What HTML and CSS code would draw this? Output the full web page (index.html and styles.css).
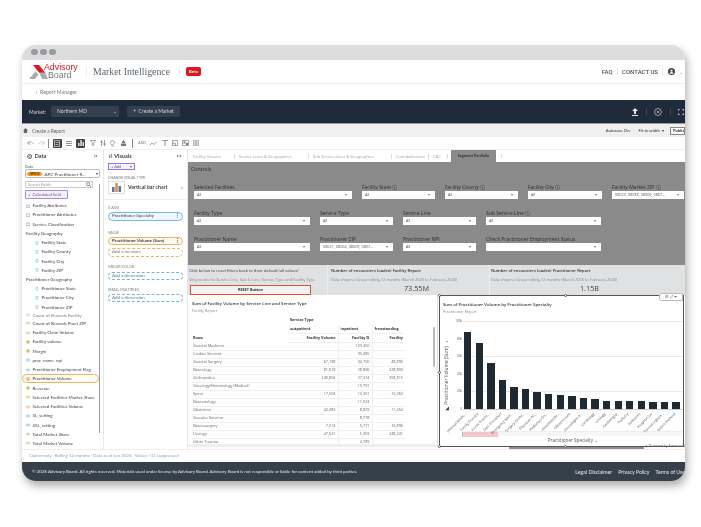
FILE: index.html
```html
<!DOCTYPE html>
<html lang="en">
<head>
  <meta charset="UTF-8">
  <meta name="viewport" content="width=device-width, initial-scale=1.0">
  <title>Market Intelligence</title>
  <link rel="stylesheet" href="styles.css">
</head>
<body>
  <svg class="sprite" aria-hidden="true">
    <symbol id="i-folder" viewBox="0 0 10 8"><path d="M.5 1h3l1 1h5v5.500h-9z" fill="none" stroke="#666"/></symbol>
    <symbol id="i-pin" viewBox="0 0 8 10"><path d="M4 9.500C2 6.500 1 5.200 1 3.600a3 3 0 0 1 6 0C7 5.200 6 6.500 4 9.500z" fill="none" stroke="#4aa3d8" stroke-width="1.200"/></symbol>
    <symbol id="i-num" viewBox="0 0 8 8"><path d="M2.500 .5v7M5.500 .5v7M.5 2.500h7M.5 5.500h7" fill="none" stroke="#e09a3e" stroke-width="1.200"/></symbol>
    <symbol id="i-eq" viewBox="0 0 8 8"><path d="M.5 2.500h7M.5 5.500h7" fill="none" stroke="#e8a64e" stroke-width="1.400"/></symbol>
    <symbol id="i-abc" viewBox="0 0 8 8"><path d="M.5 2.500h7M.5 5.500h7" fill="none" stroke="#6cb4e0" stroke-width="1.400"/></symbol>
  </svg>

  <div class="window">
    <div class="titlebar"><i></i><i></i><i></i></div>

    <header class="site-head">
      <div class="logo">
        <svg width="19" height="14" viewBox="0 0 19 14"><path d="M0 14l6.500-7.500 3 3L6 14z" fill="#a9abae"/><path d="M10 7h6l3 7h-6z" fill="#a9abae"/><path d="M4 0h6l6 7.500h-6z" fill="#e0131e"/></svg>
        <div class="logo-txt"><span class="adv">Advisory</span><span class="brd">Board</span></div>
      </div>
      <div class="app-name">Market Intelligence</div>
      <span class="beta">Beta</span>
      <nav class="head-links">
        <a>FAQ</a>
        <a>CONTACT US</a>
        <svg width="7" height="7" viewBox="0 0 8 8"><circle cx="4" cy="4" r="4" fill="#3c4650"/><circle cx="4" cy="3" r="1.300" fill="#fff"/><path d="M1.800 6.500a2.200 2 0 0 1 4.400 0z" fill="#fff"/></svg>
        <span class="caret">⌄</span>
      </nav>
    </header>

    <div class="crumb">‹&nbsp; Report Manager</div>

    <div class="market-bar">
      <span class="market-lbl">Market:</span>
      <div class="market-sel">Northern MD <span>⌄</span></div>
      <div class="market-btn">+ &nbsp;Create a Market</div>
      <div class="market-icons">
        <svg width="6" height="8" viewBox="0 0 6 8"><path d="M3 0l3 3H4v3H2V3H0zM0 7h6v1H0z" fill="#e8eaec"/></svg>
        <b></b>
        <svg width="8" height="8" viewBox="0 0 8 8"><circle cx="4" cy="4" r="3.500" fill="none" stroke="#c8ccd0" stroke-width=".7"/><path d="M2.600 2.600l2.800 2.800M5.400 2.600L2.600 5.400" stroke="#c8ccd0" stroke-width=".7"/></svg>
        <b></b>
        <svg width="6" height="6" viewBox="0 0 6 6"><path d="M0 2V0h2M4 0h2v2M6 4v2H4M2 6H0V4" fill="none" stroke="#e8eaec"/></svg>
      </div>
    </div>

    <div class="report-bar">
      <svg width="5" height="5" viewBox="0 0 6 6"><path d="M3 0l3 3H5v3H1V3H0z" fill="#666"/></svg>
      <span class="report-name">Create a Report</span>
      <div class="report-right">
        <span>Autosave On:</span>
        <span>Fit to width &nbsp;▾</span>
        <span class="publish">Publish</span>
      </div>
    </div>

    <div class="toolbar">
      <svg width="7" height="5" viewBox="0 0 7 5"><path d="M1 2c2-2 4-1.500 5.500 1M1 .5V3h2.500" fill="none" stroke="#888" stroke-width=".7"/></svg>
      <svg width="7" height="5" viewBox="0 0 7 5"><path d="M6 2C4 0 2 .5.500 3M6 .5V3H3.500" fill="none" stroke="#bbb" stroke-width=".7"/></svg>
      <b class="sep"></b>
      <span class="tool-on"><svg width="6" height="7" viewBox="0 0 6 7"><path d="M.5.500h5v6h-5zM1.500 2.500h3M1.500 4.500h3" fill="none" stroke="#ddd" stroke-width=".7"/></svg></span>
      <svg width="6" height="5" viewBox="0 0 6 5"><path d="M0 .5h6M0 2.500h6M0 4.500h6" stroke="#666" stroke-width=".7"/></svg>
      <span class="tool-on"><svg width="6" height="6" viewBox="0 0 6 6"><path d="M0 6V3h1.500v3zM2.200 6V0h1.600v6zM4.500 6V2H6v4z" fill="#ddd"/></svg></span>
      <svg width="6" height="6" viewBox="0 0 6 6"><path d="M.3.500h5.400L3.700 3v2.500l-1.400-.7V3z" fill="none" stroke="#666" stroke-width=".6"/></svg>
      <svg width="6" height="6" viewBox="0 0 6 6"><path d="M1.500 0v6M4.500 0v6M0 2h3M3 4h3" stroke="#777" stroke-width=".7"/></svg>
      <svg width="5" height="7" viewBox="0 0 5 7"><path d="M2.500.5a2 2 0 0 1 1 3.700V5h-2v-.8a2 2 0 0 1 1-3.700zM1.500 6.300h2" fill="none" stroke="#777" stroke-width=".6"/></svg>
      <svg width="7" height="6" viewBox="0 0 7 6"><path d="M3.500 0l2.500 3.500H1zM1 4h5v2H1z" fill="#777"/></svg>
      <b class="sep sep-b"></b>
      <span class="tool-txt">ADD</span>
      <svg width="7" height="5" viewBox="0 0 7 5"><path d="M0 4l2-2 2 1.500L7 .5" fill="none" stroke="#777" stroke-width=".7"/></svg>
      <svg width="6" height="6" viewBox="0 0 6 6"><path d="M0 .4h6M3 .4V6" stroke="#777" stroke-width=".8"/></svg>
      <svg width="6" height="6" viewBox="0 0 6 6"><path d="M.4.400h5.200v5.200H.4zM.4 3h3v2.600" fill="none" stroke="#777" stroke-width=".7"/></svg>
      <svg width="7" height="6" viewBox="0 0 7 6"><path d="M.4.400h6v5.200h-6z" fill="none" stroke="#777" stroke-width=".7"/><path d="M1.500 1.500h2v2h-2zM4 3h2v2H4z" fill="#777"/></svg>
      <svg width="6" height="6" viewBox="0 0 6 6"><path d="M.4.400h5.200v5.200H.4zM.4 2.200h5.200M.4 4h5.200M3 .4v5.200" fill="none" stroke="#888" stroke-width=".6"/></svg>
    </div>

    <div class="workspace">
      <aside class="pane data-pane">
        <div class="pane-head"><span>◎ &nbsp;Data</span><span class="collapse">|◂</span></div>
        <div class="mini-lbl">Data</div>
        <div class="ds-select"><span class="spice">SPICE</span> APC Practitioner R...<span class="tri">▾</span></div>
        <div class="search">Search Fields<svg width="5" height="5" viewBox="0 0 6 6"><circle cx="2.500" cy="2.500" r="2" fill="none" stroke="#555" stroke-width=".8"/><path d="M4 4l2 2" stroke="#555" stroke-width=".8"/></svg></div>
        <div class="calc-btn">+ &nbsp;Calculated field</div>
        <div class="field-wrap">
          <ul class="fields">
            <li><svg><use href="#i-folder"/></svg>Facility Attributes</li>
            <li><svg><use href="#i-folder"/></svg>Practitioner Attributes</li>
            <li><svg><use href="#i-folder"/></svg>Service Classification</li>
            <li class="group">Facility Geography</li>
            <li class="sub"><svg><use href="#i-pin"/></svg>Facility State</li>
            <li class="sub"><svg><use href="#i-pin"/></svg>Facility County</li>
            <li class="sub"><svg><use href="#i-pin"/></svg>Facility City</li>
            <li class="sub"><svg><use href="#i-pin"/></svg>Facility ZIP</li>
            <li class="group">Practitioner Geography</li>
            <li class="sub"><svg><use href="#i-pin"/></svg>Practitioner State</li>
            <li class="sub"><svg><use href="#i-pin"/></svg>Practitioner City</li>
            <li class="sub"><svg><use href="#i-pin"/></svg>Practitioner ZIP</li>
            <li class="clipped"><svg><use href="#i-eq"/></svg>Count of Records Facility</li>
            <li><svg><use href="#i-eq"/></svg>Count of Records Pract ZIP</li>
            <li><svg><use href="#i-eq"/></svg>Facility Claim Volume</li>
            <li><svg><use href="#i-num"/></svg>Facility volume</li>
            <li><svg><use href="#i-num"/></svg>Margin</li>
            <li><svg><use href="#i-abc"/></svg>prac_name_npi</li>
            <li><svg><use href="#i-abc"/></svg>Practitioner Employment Flag</li>
            <li class="picked"><svg><use href="#i-num"/></svg>Practitioner Volume</li>
            <li><svg><use href="#i-num"/></svg>Revenue</li>
            <li><svg><use href="#i-eq"/></svg>Selected Facilities Market Share</li>
            <li><svg><use href="#i-eq"/></svg>Selected Facilities Volume</li>
            <li><svg><use href="#i-abc"/></svg>SL_setting</li>
            <li><svg><use href="#i-abc"/></svg>SSL_setting</li>
            <li><svg><use href="#i-eq"/></svg>Total Market Share</li>
            <li><svg><use href="#i-eq"/></svg>Total Market Volume</li>
          </ul>
          <div class="vscroll"></div>
        </div>
      </aside>

      <aside class="pane visuals-pane">
        <div class="pane-head"><span>ıl &nbsp;Visuals</span><span class="collapse">▸◂</span></div>
        <div class="add-btn"><span>+ Add</span><span>▾</span></div>
        <div class="well-lbl type-lbl">CHANGE VISUAL TYPE</div>
        <div class="type-row">
          <span class="type-icon"><svg width="9" height="9" viewBox="0 0 9 9"><path d="M0 9V4h2.500v5z" fill="#5f6fb0"/><path d="M3.200 9V0h2.600v9z" fill="#d9973d"/><path d="M6.500 9V3H9v6z" fill="#5f6fb0"/></svg></span>
          <span class="type-name">Vertical bar chart</span>
          <span class="type-go">›</span>
        </div>
        <div class="well-lbl xaxis">X AXIS</div>
        <div class="pill blue solid">Practitioner Specialty<span>⋮</span></div>
        <div class="well-lbl value">VALUE</div>
        <div class="pill orange solid">Practitioner Volume (Sum)<span>⋮</span></div>
        <div class="pill orange second">Add a measure</div>
        <div class="well-lbl group-lbl">GROUP/COLOR</div>
        <div class="pill blue group-pill">Add a dimension</div>
        <div class="well-lbl small-lbl">SMALL MULTIPLES</div>
        <div class="pill blue">Add a dimension</div>
      </aside>

      <main class="canvas">
        <div class="tabs">
          <span>Facility Volume</span>
          <span>Service Lines &amp; Geographies</span>
          <span>Sub Service Lines &amp; Geographies</span>
          <span>Cannibalization</span>
          <span>CAC</span>
          <span class="active">Segment Portfolio</span>
          <span class="empty"></span>
        </div>

        <section class="controls">
          <div class="controls-title">Controls</div>
          <div class="ctl-row">
            <div class="ctl w158"><label>Selected Facilities</label><div class="sel">All<span>▾</span></div></div>
            <div class="ctl w73"><label>Facility State ⓘ</label><div class="sel">All<span>▾</span></div></div>
            <div class="ctl w73"><label>Facility County ⓘ</label><div class="sel">All<span>▾</span></div></div>
            <div class="ctl w74"><label>Facility City ⓘ</label><div class="sel">All<span>▾</span></div></div>
            <div class="ctl w72"><label>Facility Market ZIP ⓘ</label><div class="sel">08023, 08038, 08069, 0807...<span>▾</span></div></div>
          </div>
          <div class="ctl-row">
            <div class="ctl w116"><label>Facility Type</label><div class="sel">All<span>▾</span></div></div>
            <div class="ctl w73"><label>Service Type</label><div class="sel">All<span>▾</span></div></div>
            <div class="ctl w73"><label>Service Line</label><div class="sel">All<span>▾</span></div></div>
            <div class="ctl w115"><label>Sub Service Line ⓘ</label><div class="sel">All<span>▾</span></div></div>
          </div>
          <div class="ctl-row">
            <div class="ctl w116"><label>Practitioner Name</label><div class="sel">All<span>▾</span></div></div>
            <div class="ctl w73"><label>Practitioner ZIP</label><div class="sel">08021, 08004, 08009, 0807...<span>▾</span></div></div>
            <div class="ctl w73"><label>Practitioner NPI</label><div class="sel">All<span>▾</span></div></div>
            <div class="ctl w115"><label>Check Practitioner Employment Status</label><div class="sel"><span>▾</span></div></div>
          </div>
        </section>

        <section class="kpis">
          <div class="kpi kpi-a">
            <p class="kpi-title plain">Click below to reset filters back to their default (all values)</p>
            <p class="kpi-note">Only works for Service Line, Sub S. Line, Service Type and Facility Type</p>
            <div class="reset">RESET Button</div>
          </div>
          <div class="kpi kpi-b">
            <p class="kpi-title">Number of encounters loaded: Facility Report</p>
            <p class="kpi-note">Data shown is latest rolling-12 months (March 2025 to February 2026)</p>
            <div class="kpi-val">73.55M</div>
          </div>
          <div class="kpi kpi-c">
            <p class="kpi-title">Number of encounters loaded: Practitioner Report</p>
            <p class="kpi-note">Data shown is latest rolling-12 months (March 2025 to February 2026)</p>
            <div class="kpi-val">1.15B</div>
          </div>
        </section>

        <section class="visuals">
          <div class="table-card">
            <div class="card-title">Sum of Facility Volume by Service Line and Service Type</div>
            <div class="card-sub">Facility Report</div>
            <table class="pivot">
              <colgroup><col class="c-rows"><col class="c-out"><col class="c-in"><col class="c-free"></colgroup>
              <tr class="top"><th></th><th colspan="3" class="left">Service Type</th></tr>
              <tr class="head"><th></th><th class="left">outpatient</th><th class="left">inpatient</th><th class="left">freestanding</th></tr>
              <tr class="head"><th class="left">Rows</th><th>Facility Volume</th><th>Facility ⇅</th><th>Facility</th></tr>
              <tr><td>General Medicine</td><td></td><td>123,450</td><td></td></tr>
              <tr><td>Cardiac Services</td><td></td><td>95,485</td><td></td></tr>
              <tr><td>General Surgery</td><td>67,198</td><td>34,700</td><td>48,890</td></tr>
              <tr><td>Neurology</td><td>81,619</td><td>28,806</td><td>228,800</td></tr>
              <tr><td>Orthopedics</td><td>140,804</td><td>27,314</td><td>358,815</td></tr>
              <tr><td>Oncology/Hematology (Medical)</td><td></td><td>15,791</td><td></td></tr>
              <tr><td>Spine</td><td>17,504</td><td>13,301</td><td>10,263</td></tr>
              <tr><td>Neonatology</td><td></td><td>11,024</td><td></td></tr>
              <tr><td>Obstetrics</td><td>42,483</td><td>8,829</td><td>11,454</td></tr>
              <tr><td>Vascular Services</td><td></td><td>8,778</td><td></td></tr>
              <tr><td>Neurosurgery</td><td>7,013</td><td>5,771</td><td>16,896</td></tr>
              <tr><td>Urology</td><td>47,621</td><td>5,303</td><td>248,241</td></tr>
              <tr><td>Other Trauma</td><td></td><td>4,789</td><td></td></tr>
            </table>
            <div class="table-scroll"></div>
          </div>

          <div class="chart-card">
            <i class="handle h-tl"></i><i class="handle h-tc"></i><i class="handle h-ml"></i><i class="handle h-bl"></i><i class="handle h-bc"></i>
            <div class="chart-tools">⚙ ⤢ ⏷</div>
            <div class="card-title">Sum of Practitioner Volume by Practitioner Specialty</div>
            <div class="card-sub">Practitioner Report</div>
            <div class="chart-body">
              <div class="y-title">◤ Practitioner Volume (Sum) ⌄</div>
              <div class="y-ticks"><span>100k</span><span>80k</span><span>60k</span><span>40k</span><span>20k</span><span>0</span></div>
              <div class="plot">
                <div class="bars">
                  <i style="height:76.7px"></i><i style="height:65.7px"></i><i style="height:45.7px"></i><i style="height:29px"></i><i style="height:21.7px"></i><i style="height:20.3px"></i><i style="height:17px"></i><i style="height:14.7px"></i><i style="height:13.700px"></i><i style="height:13px"></i><i style="height:11.3px"></i><i style="height:10px"></i><i style="height:8.3px"></i><i style="height:7.7px"></i><i style="height:7.7px"></i><i style="height:7.7px"></i><i style="height:7px"></i><i style="height:6.7px"></i><i style="height:6.7px"></i>
                </div>
                <div class="x-labels">
                  <span>Internal Medic...</span><span>Family Practice</span><span>Nurse Practit...</span><span>Gen. Practition</span><span>Emergency Med...</span><span>Surgery Ortho...</span><span>Physician As...</span><span>Radiation On...</span><span>Anesthesiolo...</span><span>Obstetricians</span><span>Neurologist A...</span><span>Cardiology</span><span>Urology</span><span>Cardiologist</span><span>Podiatry</span><span>Pediatrics</span><span>Hospital Car</span><span>Neurosurgeon...</span><span>Gastro General</span>
                </div>
                <div class="x-scroll"><i></i></div>
                <div class="x-title">Practitioner Specialty ⌄</div>
              </div>
            </div>
          </div>
        </section>
        <div class="canvas-foot"><div class="h-thumb"></div><div class="powered">◍ Powered by Amazon Q</div></div>
      </main>
    </div>

    <div class="disclaimer">Claims-only · Rolling 12 months · Data as of Jun 2026 · Values &lt;11 suppressed</div>

    <footer class="site-foot">
      <span>© 2026 Advisory Board. All rights reserved. Materials used under license by Advisory Board. Advisory Board is not responsible or liable for content added by third parties.</span>
      <nav><a>Legal Disclaimer</a><a>Privacy Policy</a><a>Terms of Use</a></nav>
    </footer>
  </div>
</body>
</html>
```

FILE: styles.css
```css
* { box-sizing: border-box; }

html, body { margin: 0; height: 100%; }

body {
  background: #fff;
  padding: 45px 0 0 22px;
  font-family: "Lato", "Liberation Sans", sans-serif;
  color: #444;
  overflow: hidden;
}

.sprite { display: none; }

.window {
  width: 663px;
  height: 436px;
  border-radius: 14px;
  overflow: hidden;
  background: #fff;
  box-shadow: 2px 5px 9px rgba(0, 0, 0, .32);
  display: flex;
  flex-direction: column;
  filter: blur(.4px);
}

/* window chrome */
.titlebar {
  height: 15px;
  background: #dcddde;
  display: flex;
  align-items: center;
  gap: 2.500px;
  padding: 0 0 1px 9px;
}
.titlebar i { width: 6.700px; height: 6.700px; border-radius: 50%; background: #999b9e; }

.site-head {
  height: 24px;
  display: flex;
  align-items: center;
  padding-left: 7px;
  border-bottom: 1px solid #f0f0f0;
}
.logo { display: flex; align-items: center; width: 57px; flex: none; }
.logo-txt {
  display: flex;
  flex-direction: column;
  margin-left: -4px;
  font-family: "Liberation Sans", sans-serif;
  font-size: 8.800px;
  line-height: 8.800px;
}
.adv { color: #e0131e; height: 7.500px; line-height: 7.500px; overflow: visible; }
.brd { color: #777; margin-left: 4px; height: 7.500px; line-height: 7.500px; }
.app-name {
  width: 94px;
  padding-left: 6px;
  border-left: 1px solid #eee;
  border-right: 1px solid #eee;
  font-family: "Liberation Serif", serif;
  font-size: 9.800px;
  color: #5b6670;
  white-space: nowrap;
}
.beta {
  margin-left: 6px;
  width: 15px;
  height: 9px;
  border-radius: 2px;
  background: #e0131e;
  color: #fff;
  font-size: 4.500px;
  font-weight: 700;
  line-height: 9px;
  text-align: center;
}
.head-links {
  margin-left: auto;
  padding-right: 2px;
  display: flex;
  align-items: center;
  gap: 8.500px;
  font-family: "Roboto", sans-serif;
  font-size: 6px;
  font-weight: 500;
  color: #4a535c;
}
.head-links a + a { border-left: 1px solid #e6e6e6; border-right: 1px solid #e6e6e6; padding: 0 4px; margin: 0 -4px; }
.caret { margin-left: -4px; font-size: 5px; color: #999; }

.crumb {
  height: 16px;
  padding-left: 14px;
  font-size: 5.200px;
  line-height: 16px;
  color: #777;
}

.market-bar {
  height: 24px;
  background: #1f2a3a;
  border-bottom: 1px solid #999;
  display: flex;
  align-items: center;
  padding-left: 7px;
  font-size: 5px;
  color: #cfd3d8;
}
.market-lbl { width: 22px; }
.market-sel {
  width: 68px;
  height: 11px;
  background: #33404f;
  border-radius: 1px;
  padding: 0 2px 0 6px;
  line-height: 10px;
  display: flex;
  justify-content: space-between;
}
.market-btn {
  margin-left: 8px;
  width: 53px;
  height: 11px;
  background: #33404f;
  border-radius: 1px;
  line-height: 10px;
  text-align: center;
}
.market-icons {
  margin-left: auto;
  margin-right: 1px;
  display: flex;
  align-items: center;
  gap: 7.500px;
}
.market-icons b { width: 1px; height: 7px; background: #3a4757; }

.report-bar {
  height: 13px;
  background: #f0f0f0;
  display: flex;
  align-items: center;
  padding-left: 1px;
  font-size: 4.800px;
  color: #666;
}
.report-name { margin-left: 4px; }
.report-right {
  margin-left: auto;
  display: flex;
  align-items: center;
  gap: 8px;
  font-size: 4.200px;
  color: #333;
}
.publish {
  margin-left: -2px;
  width: 15px;
  height: 8px;
  background: #fff;
  border: 1px solid #888;
  line-height: 6px;
  padding-left: 2px;
  font-weight: 700;
  overflow: hidden;
}

.toolbar {
  height: 13px;
  display: flex;
  align-items: center;
  gap: 4.300px;
  padding-left: 5px;
  border-bottom: 1px solid #eee;
}
.sep { width: 1px; height: 9px; margin-left: -2px; background: #888; }
.sep-b { margin-left: 1px; }
.tool-on {
  width: 9px;
  height: 9px;
  background: #444;
  border-radius: 1px;
  display: flex;
  align-items: center;
  justify-content: center;
}
.tool-txt { margin-left: 1px; font-size: 3.500px; color: #777; }

/* builder area */
.workspace {
  height: 299px;
  display: grid;
  grid-template-columns: 82px 84px 1fr;
  overflow: hidden;
}
.pane { border-right: 1px solid #e8e8e8; padding: 0 3px; overflow: hidden; }

.pane-head {
  height: 14px;
  display: flex;
  justify-content: space-between;
  padding: 3px 3px 0 2px;
  font-size: 5.500px;
  font-weight: 700;
  color: #444;
}
.collapse { font-size: 4px; color: #777; }

.mini-lbl { height: 5px; font-size: 3.800px; line-height: 5px; color: #555; }
.ds-select {
  width: 75px;
  height: 9px;
  border: 1px solid #bbb;
  border-radius: 2px;
  display: flex;
  align-items: center;
  padding: 0 1px;
  font-size: 4.600px;
  white-space: nowrap;
}
.spice {
  background: #f59a1b;
  border-radius: 3px;
  padding: 0 3px;
  margin-right: 2px;
  font-size: 3.500px;
  font-weight: 700;
  color: #5a3400;
}
.tri { margin-left: auto; font-size: 4px; }
.search {
  width: 68px;
  height: 7px;
  margin-top: 3px;
  border: 1px solid #ccc;
  padding: 0 1px 0 2px;
  display: flex;
  justify-content: space-between;
  align-items: center;
  font-size: 4px;
  color: #999;
}
.calc-btn {
  width: 43px;
  height: 9px;
  margin-top: 2px;
  border: 1px solid #a78bdc;
  border-radius: 1px;
  background: #f4f0fc;
  font-size: 4.200px;
  line-height: 7px;
  padding-left: 2px;
  color: #6a4fb0;
  white-space: nowrap;
}

.field-wrap { display: flex; margin-top: 2px; height: 250px; }
.fields {
  list-style: none;
  margin: 0;
  padding: 0;
  width: 74px;
  flex: none;
  font-size: 4.500px;
  color: #444;
}
.fields li {
  height: 9.240px;
  display: flex;
  align-items: center;
  gap: 2.500px;
  padding-left: 1px;
  white-space: nowrap;
}
.fields svg { width: 4px; height: 4px; flex: none; }
.fields .group { padding-left: 1px; }
.fields .sub { padding-left: 10px; }
.fields .clipped { height: 7px; overflow: hidden; opacity: .7; }
.fields .picked {
  border: 1px solid #eab46c;
  border-radius: 5px;
  background: #fffaf2;
  margin-left: -3px;
  padding-left: 3px;
}
.vscroll { width: 3px; margin-left: 0; height: 249px; margin-top: -17px; background: #9a9a9a; border-radius: 2px; }

.add-btn {
  width: 27px;
  height: 7px;
  margin-left: 1px;
  margin-top: -1px;
  border: 1px solid #9a78d8;
  display: flex;
  justify-content: space-between;
  font-size: 4px;
  line-height: 5px;
  color: #6a4fb0;
  padding: 0 2px;
  background: #f6f2fd;
}
.well-lbl { margin-left: 1px; font-size: 3.600px; line-height: 5px; height: 5px; color: #777; }
.type-lbl { margin-top: 5px; }
.type-row {
  margin: 1px -3px 0;
  padding: 0 4px 6px;
  height: 19px;
  display: flex;
  align-items: center;
  border-bottom: 1px solid #eee;
}
.type-icon {
  width: 17px;
  height: 13px;
  border: 1px solid #ddd;
  display: flex;
  align-items: center;
  justify-content: center;
}
.type-name { margin-left: 3px; font-size: 5.200px; font-weight: 700; color: #444; white-space: nowrap; }
.type-go { margin-left: auto; font-size: 7px; color: #777; line-height: 5px; }
.xaxis { margin-top: 5px; }
.value { margin-top: 9px; }
.group-lbl { margin-top: 7px; }
.small-lbl { margin-top: 6.500px; }
.pill {
  height: 8.500px;
  margin: 2px 0 0 1px;
  width: 75px;
  border: 1px dashed;
  border-radius: 5px;
  padding: 0 2px 0 3px;
  display: flex;
  justify-content: space-between;
  font-size: 4.500px;
  line-height: 6.500px;
  color: #777;
  white-space: nowrap;
}
.pill.blue { border-color: #72b6e2; }
.pill.orange { border-color: #ecb166; }
.pill.solid { border-style: solid; color: #444; }
.pill.blue.solid { background: #eef7fd; }
.pill.orange.solid { background: #fff8ef; font-weight: 700; }
.pill.second, .pill.group-pill { margin-top: 3px; }

/* report canvas */
.canvas { min-width: 0; overflow: hidden; font-family: "Open Sans", "Liberation Sans", sans-serif; }

.tabs {
  height: 12px;
  display: flex;
  align-items: center;
  padding-left: 4px;
  font-size: 4px;
  color: #a0a0a0;
  white-space: nowrap;
}
.tabs span { padding-left: 1px; border-right: 1px solid #ddd; line-height: 5px; margin-right: 3px; overflow: hidden; }
.tabs span:nth-child(1) { width: 43px; }
.tabs span:nth-child(2) { width: 71px; }
.tabs span:nth-child(3) { width: 80px; }
.tabs span:nth-child(4) { width: 34px; }
.tabs span:nth-child(5) { width: 16px; margin-right: 3px; }
.tabs .active {
  width: 45px;
  height: 12px;
  margin: 0 5px 0 0;
  padding: 0;
  background: #8a8a8a;
  border: 0;
  color: #333;
  font-size: 3.500px;
  font-weight: 700;
  line-height: 12px;
  text-align: center;
}
.tabs .empty { padding: 0; margin: 0; height: 4px; }

.controls {
  height: 103px;
  background: #8a8a8a;
  padding-left: 6px;
  color: #2e2e2e;
  overflow: hidden;
}
.controls-title { height: 22px; padding-top: 4px; margin-left: -3px; font-size: 5.200px; line-height: 7px; }
.ctl-row { display: flex; gap: 10px; margin-bottom: 11.500px; white-space: nowrap; }
.ctl { flex: none; }
.ctl label { display: block; height: 7px; font-size: 5px; line-height: 6px; }
.sel {
  height: 7.500px;
  background: #fff;
  padding: 0 5px 0 3px;
  display: flex;
  justify-content: space-between;
  font-size: 3.800px;
  line-height: 7.500px;
  color: #555;
  overflow: hidden;
}
.sel span { margin-left: auto; font-size: 3.500px; color: #777; }
.w158 { width: 158px; }
.w116 { width: 116px; }
.w115 { width: 115px; }
.w74 { width: 74px; }
.w73 { width: 73px; }
.w72 { width: 72px; }

.kpis {
  height: 30px;
  display: grid;
  grid-template-columns: 139px 161px 1fr;
  gap: 1px;
  background: #eee;
  overflow: hidden;
}
.kpi { background: #dfe1e2; padding: 3px 3px 0; font-size: 4.100px; color: #444; white-space: nowrap; overflow: hidden; }
.kpi-a { padding-left: 1px; }
.kpi-c { padding-left: 1px; }
.kpi p { margin: 0; line-height: 6px; }
.kpi-title { font-weight: 600; color: #333; }
.kpi-title.plain { font-weight: 400; }
.kpi .kpi-note { margin-top: 3px; color: #888; font-size: 3.900px; }
.reset {
  width: 121px;
  height: 10px;
  margin: 2px 0 0 1px;
  background: #f2f2f2;
  border: 1px solid #d9532c;
  text-align: center;
  font-size: 3.800px;
  font-weight: 700;
  line-height: 8px;
  color: #333;
}
.kpi-val { text-align: center; font-size: 7.300px; line-height: 11px; color: #444; }
.kpi-b .kpi-val { padding-left: 16px; }
.kpi-c .kpi-val { padding-left: 6px; }

.visuals { height: 151px; display: grid; grid-template-columns: 250px 246px; }
.table-card { position: relative; padding: 5px 0 0 4px; border-right: 1px solid #ddd; border-bottom: 3px solid #eee; overflow: hidden; }
.card-title { font-size: 4.300px; font-weight: 600; line-height: 6px; color: #333; white-space: nowrap; }
.card-sub { margin-top: 2px; font-size: 3.800px; line-height: 6px; color: #888; }

.pivot {
  width: 213px;
  margin-top: 1px;
  table-layout: fixed;
  border-collapse: collapse;
  font-size: 3.800px;
  color: #666;
}
.c-rows { width: 96px; }
.c-out { width: 50px; }
.c-in { width: 34px; }
.c-free { width: 33px; }
.pivot td, .pivot th {
  height: 8px;
  padding: 0 2px;
  line-height: 6px;
  border-bottom: 1px solid #f0f0f0;
  text-align: right;
  white-space: nowrap;
}
.pivot th { font-weight: 700; color: #333; }
.pivot .left { text-align: left; }
.pivot td:first-child { text-align: left; padding-left: 1px; }
.pivot th:first-child { padding-left: 1px; }
.pivot td:nth-child(2), .pivot th:nth-child(2) { border-right: 1px solid #f0f0f0; }
.pivot td:nth-child(3), .pivot th:nth-child(3) { border-right: 1px solid #f0f0f0; }
.pivot .top th { height: 10px; border: 0; }
.pivot .top th.left { padding-left: 2px; }
.pivot .head th { height: 8.500px; }
.pivot .head th:first-child { border-bottom-color: transparent; }

.table-scroll { position: absolute; top: 32px; right: 2px; width: 2px; height: 40px; background: #bbb; border-radius: 1px; }

.chart-card {
  position: relative;
  margin-left: 1px;
  width: 245px;
  border: 1px solid #555;
  padding: 5px 0 0 3px;
}
.handle { position: absolute; width: 3px; height: 3px; border: 1px solid #555; border-radius: 50%; background: #fff; }
.h-tl { left: -2px; top: -2px; }
.h-tc { left: 124px; top: -2px; }
.h-ml { left: -2px; top: 75px; }
.h-bl { left: -2px; bottom: -2px; }
.h-bc { left: 124px; bottom: -2px; }
.chart-tools {
  position: absolute;
  top: -3px;
  right: 0;
  width: 24px;
  height: 8px;
  background: #fff;
  border: 1px solid #bbb;
  border-radius: 3px 0 0 3px;
  font-size: 4px;
  line-height: 6px;
  text-align: center;
  color: #555;
  white-space: nowrap;
  overflow: hidden;
}

.chart-body { display: flex; margin-top: 6px; height: 125px; }
.y-title {
  width: 7px;
  height: 90px;
  writing-mode: vertical-rl;
  transform: rotate(180deg);
  font-size: 4.800px;
  line-height: 7px;
  color: #444;
  white-space: nowrap;
  text-align: left;
}
.y-ticks {
  width: 13px;
  height: 92px;
  margin-top: -2px;
  display: flex;
  flex-direction: column;
  justify-content: space-between;
  align-items: flex-end;
  padding: 0 1px 0 0;
  font-size: 3px;
  line-height: 4px;
  color: #555;
}
.plot { flex: 1; min-width: 0; }
.bars {
  height: 89px;
  display: flex;
  align-items: flex-end;
  gap: 4.200px;
  padding-left: 1px;
  background: repeating-linear-gradient(to bottom, #e9e9e9 0, #e9e9e9 .6px, transparent .6px, transparent 17.600px);
  border-bottom: 1px solid #ccc;
}
.bars i { flex: none; width: 7.400px; background: #1f2a33; }

.x-labels { display: flex; height: 21px; margin-left: -10px; }
.x-labels span {
  flex: none;
  width: 11.600px;
  height: 4px;
  display: flex;
  justify-content: flex-end;
  font-size: 3.500px;
  line-height: 4px;
  color: #555;
  white-space: nowrap;
  transform-origin: 100% 0;
  transform: translateY(2px) rotate(-45deg);
}
.x-scroll { height: 5px; margin: 0 1px 0 -1px; background: #f6f6f6; border-top: 1px solid #eee; }
.x-scroll i { display: block; width: 36px; height: 5px; background: #f5c6cf; border-left: 1px solid #bbb; }
.x-title { margin-top: 1px; text-align: center; font-size: 4.600px; line-height: 6px; color: #555; }

.canvas-foot { height: 3px; display: flex; margin-top: 1px; }
.h-thumb { width: 136px; height: 2px; margin-left: 321px; background: #8f8f8f; }
.powered { width: 41px; margin-top: -4px; background: #fff; font-size: 3.400px; line-height: 6px; height: 6px; color: #555; white-space: nowrap; overflow: hidden; padding-left: 1px; }

.disclaimer {
  height: 13px;
  padding-left: 7px;
  border-top: 1px solid #eee;
  font-size: 4.400px;
  line-height: 12px;
  color: #9aa0a6;
}

.site-foot {
  flex: 1;
  background: #36404a;
  display: flex;
  align-items: center;
  justify-content: space-between;
  padding: 0 0 0 10px;
  font-size: 4.420px;
  color: #e4e6e8;
  white-space: nowrap;
}
.site-foot nav { display: flex; gap: 6px; font-size: 5.200px; }
```
